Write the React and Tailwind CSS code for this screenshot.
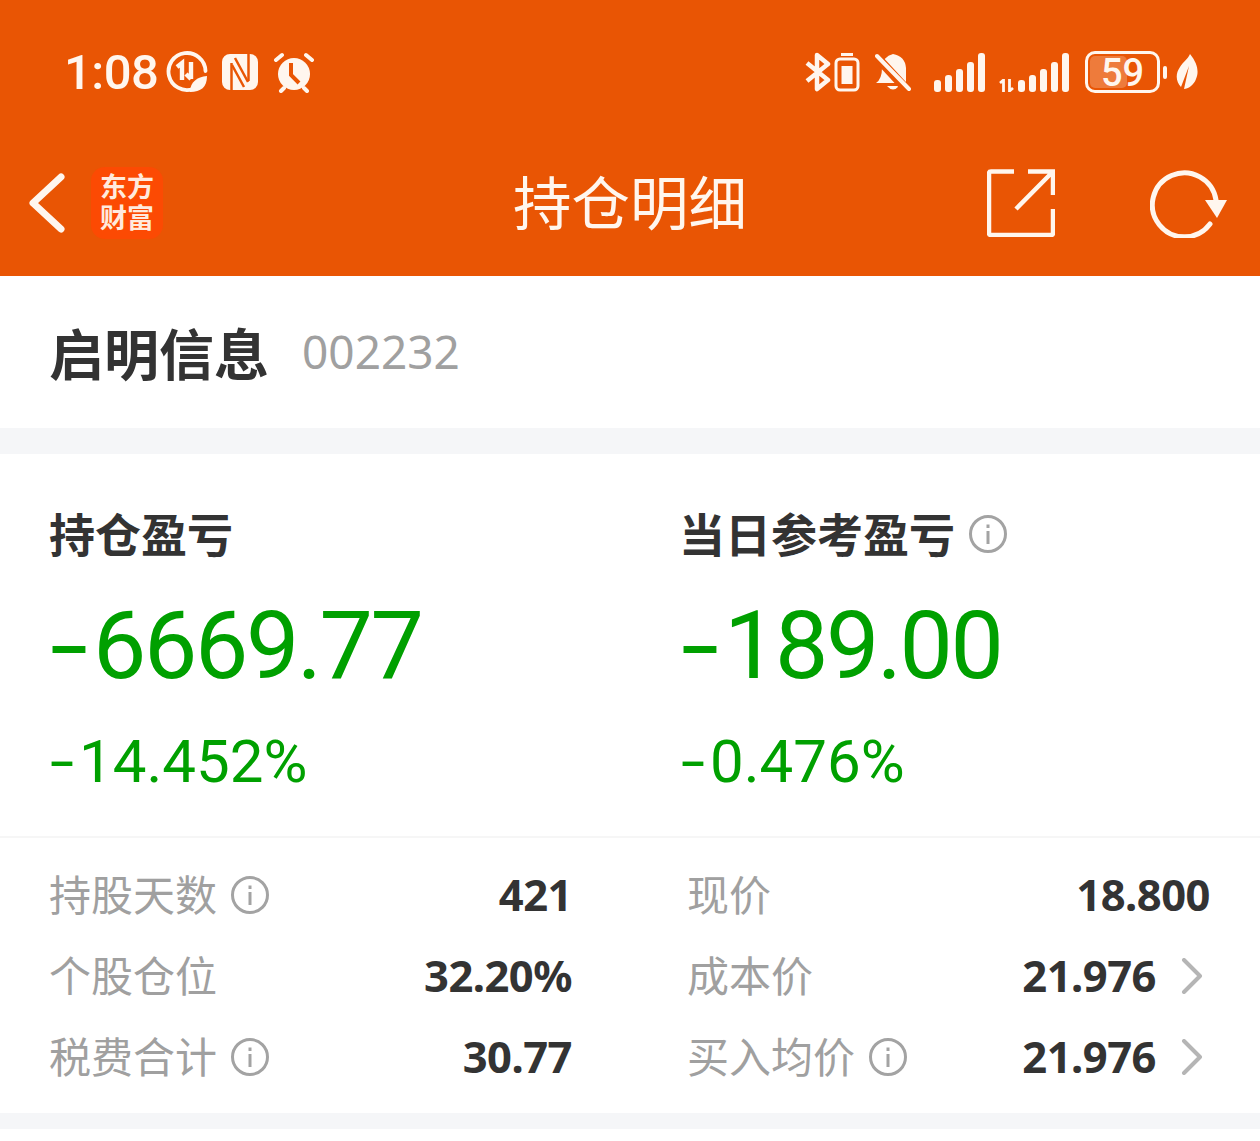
import React from "react";

const CJK = { fontFamily: '"Noto Sans CJK SC", "Noto Sans", sans-serif' };
const NUM = { fontFamily: 'Roboto, sans-serif' };

function Info({ size = 40 }) {
  return (
    <svg width={size} height={size} viewBox="0 0 40 40" fill="none" className="shrink-0">
      <circle cx="20" cy="20" r="17.5" stroke="#a3a3a3" strokeWidth="3" />
      <rect x="18.5" y="17" width="3" height="13" fill="#a3a3a3" />
      <rect x="18.5" y="10.5" width="3" height="3.5" fill="#a3a3a3" />
    </svg>
  );
}

function Chevron() {
  return (
    <svg width="24" height="36" viewBox="0 0 24 36" fill="none" className="shrink-0">
      <path d="M4 2 L20 18 L4 34" stroke="#b5b5b5" strokeWidth="4" strokeLinecap="round" strokeLinejoin="round" />
    </svg>
  );
}

function StatusLeft() {
  return (
    <div className="flex items-center">
      <span className="text-[49px] font-medium leading-none text-[#fff6ee] tracking-[-0.5px]" style={NUM}>1:08</span>
      <svg width="42" height="42" viewBox="0 0 42 42" fill="none" className="ml-[8px]">
        <path d="M27 38 A18.5 18.5 0 1 1 39.5 20" stroke="#fff6ee" strokeWidth="3.8" strokeLinecap="round" />
        <path d="M11 16 l5 -4 v17 M25 11 v17 m-5 -5 l5 5" stroke="#fff6ee" strokeWidth="4.4" />
        <path d="M24 41 C24 31 31 26 41 25 C41 36 35 41 24 41Z" fill="#fff6ee" />
      </svg>
      <svg width="38" height="38" viewBox="0 0 38 38" className="ml-[13px]">
        <rect x="1" y="1" width="36" height="36" rx="8" fill="#fff6ee" />
        <path d="M10.5 10 V39 M27.5 -1 V28" stroke="#e95504" strokeWidth="2.5" />
        <path d="M14 5 L27 29 M11 12 L23 34" stroke="#e95504" strokeWidth="2.5" fill="none" />
      </svg>
      <svg width="42" height="42" viewBox="0 0 42 42" fill="none" className="ml-[14px]">
        <circle cx="21" cy="23" r="16" fill="#fff6ee" />
        <path d="M18 12 V24 L26 32" stroke="#e95504" strokeWidth="4" />
        <path d="M3 9 L9 4 M39 9 L33 4 M8 40 L11 37 M34 40 L31 37" stroke="#fff6ee" strokeWidth="4" strokeLinecap="round" />
      </svg>
    </div>
  );
}

function Bars({ heights }) {
  return (
    <div className="flex items-end gap-[4px]">
      {heights.map((h, i) => (
        <div key={i} className="w-[7px] rounded-[3px] bg-[#fff6ee]" style={{ height: h }} />
      ))}
    </div>
  );
}

function StatusRight() {
  return (
    <div className="flex items-center">
      <svg width="26" height="40" viewBox="0 0 26 40" fill="none">
        <path d="M2 11 L23 28 L12 37 V3 L23 12 L2 29" stroke="#fff6ee" strokeWidth="4.5" strokeLinejoin="round" />
      </svg>
      <svg width="26" height="40" viewBox="0 0 26 40" fill="none" className="ml-[3px]">
        <rect x="7" y="1" width="12" height="3" fill="#fff6ee" />
        <rect x="2" y="7" width="22" height="31" rx="4" stroke="#fff6ee" strokeWidth="3" />
        <rect x="7.5" y="14" width="11" height="18" fill="#fff6ee" />
      </svg>
      <svg width="36" height="40" viewBox="0 0 36 40" fill="none" className="ml-[15px]">
        <path d="M1 31 Q7 27 7 16 Q8 4 18 2 Q30 4 31 16 L31 31Z" fill="#fff6ee" />
        <path d="M12 34 Q18 41 24 34Z" fill="#fff6ee" />
        <path d="M-2 1 L33 39" stroke="#e95504" strokeWidth="9" />
        <path d="M2 4 L34 37" stroke="#fff6ee" strokeWidth="4" strokeLinecap="round" />
      </svg>
      <div className="ml-[23px] h-[40px] flex items-end"><Bars heights={[12, 17, 23, 30, 39]} /></div>
      <div className="ml-[13px] flex items-end h-[40px]">
        <svg width="17" height="13" viewBox="0 0 17 13" fill="none" className="mr-[3px]">
          <path d="M2 4 L5.5 1 V13 M11.5 0 V12 L15 9" stroke="#fff6ee" strokeWidth="2.8" />
        </svg>
        <Bars heights={[12, 17, 23, 30, 39]} />
      </div>
      <div className="relative ml-[16px] h-[42px] w-[75px] rounded-[10px] border-[3px] border-[#fff6ee] overflow-hidden">
        <div className="absolute inset-y-[2px] left-[2px] w-[37px] rounded-[5px] bg-[#ee7b3b]" />
        <div className="relative flex h-full items-center justify-center pt-[1px] text-[38px] font-medium leading-none text-[#fff6ee]" style={NUM}>59</div>
      </div>
      <div className="ml-[3px] h-[13px] w-[4px] rounded-[2px] bg-[#fff6ee]" />
      <svg width="22" height="36" viewBox="0 0 22 36" className="ml-[9px]">
        <path d="M14 0 C22 10 23 18 20 25 C18 31 12 35 8 35 L13 12 L5 33 C0 28 -1 20 4 13 C7 8 12 5 14 0Z" fill="#fff6ee" />
      </svg>
    </div>
  );
}

function Row({ label, info, value, chevron }) {
  return (
    <div className="flex h-[81px] items-center">
      <span className="-ml-[1px] -translate-y-[2px] text-[42px] leading-none text-[#a0a0a0]" style={CJK}>{label}</span>
      {info && <span className="ml-[13px]"><Info /></span>}
      <span className="ml-auto text-[43.5px] font-bold leading-none text-[#333333]" style={{ fontFamily: '"Noto Sans", sans-serif', letterSpacing: "-0.5px" }}>{value}</span>
      {chevron && <span className="ml-[24px] mr-[6px]"><Chevron /></span>}
    </div>
  );
}

function Big({ children }) {
  return (
    <div className="mt-[44px] flex text-[95px] leading-[90px] tracking-[-2.4px] text-[#00a000]" style={NUM}>
      <span className="inline-block w-[43px] origin-left scale-x-[1.45]">-</span>
      <span>{children}</span>
    </div>
  );
}

function Pct({ children }) {
  return (
    <div className="mt-[41px] flex text-[60px] leading-[60px] text-[#00a000]" style={NUM}>
      <span className="inline-block w-[29px] origin-left scale-x-[1.45]">-</span>
      <span>{children}</span>
    </div>
  );
}

export default function App() {
  return (
    <div className="min-h-[1141px] w-[1260px] overflow-hidden bg-white">
      <header className="bg-[#e95504]">
        <div className="flex h-[140px] items-center justify-between pt-[4px] pl-[64px] pr-[62px]">
          <StatusLeft />
          <StatusRight />
        </div>
        <div className="grid h-[136px] grid-cols-[1fr_auto_1fr] items-center pb-[10px] pl-[28px] pr-[32px]">
          <div className="flex items-center">
            <svg width="38" height="60" viewBox="0 0 38 60" fill="none" className="mr-[25px]">
              <path d="M33 4 L5 30 L33 56" stroke="#fff6ee" strokeWidth="7" strokeLinecap="round" strokeLinejoin="round" />
            </svg>
            <div className="flex h-[72px] w-[72px] items-center justify-center rounded-[14px] bg-[#fc4a03] pb-[4px] text-center text-[27px] font-bold leading-[31px] text-[#ffeadd]" style={CJK}>
              <span>东方<br />财富</span>
            </div>
          </div>
          <div className="translate-x-[2px] -translate-y-[3px] text-center text-[58.5px] leading-[70px] text-[#fff6ee]" style={CJK}>持仓明细</div>
          <div className="flex items-center justify-end">
            <svg width="68" height="68" viewBox="0 0 68 68" fill="none">
              <path d="M27 2.5 H4 Q2 2.5 2 4.5 V64 Q2 66 4 66 H64 Q66 66 66 64 V40" stroke="#fff6ee" strokeWidth="4.5" />
              <path d="M41 2.5 H66 V26 M66 2.5 L29 40" stroke="#fff6ee" strokeWidth="4.5" />
            </svg>
            <svg width="78" height="70" viewBox="0 0 78 70" fill="none" className="ml-[95px]">
              <path d="M60 56 A32 32 0 1 1 66 32" stroke="#fff6ee" strokeWidth="5" strokeLinecap="round" />
              <path d="M55 32 H77 L67 50Z" fill="#fff6ee" />
            </svg>
          </div>
        </div>
      </header>

      <section className="flex h-[152px] items-center pb-[2px] pl-[49px] pr-[50px]">
        <span className="text-[55px] font-bold leading-none text-[#333333]" style={CJK}>启明信息</span>
        <span className="ml-[33px] text-[46px] leading-none text-[#a0a0a0]" style={{ fontFamily: '"Noto Sans", sans-serif' }}>002232</span>
      </section>
      <div className="h-[26px] bg-[#f5f6f8]" />

      <section>
        <div className="grid h-[384px] grid-cols-[631px_1fr] border-b-2 border-[#f6f6f6] pl-[50px] pr-[50px]">
          <div>
            <div className="-ml-[1px] mt-[53px] flex h-[50px] items-center text-[46px] font-bold leading-none text-[#333333]" style={CJK}>持仓盈亏</div>
            <Big>6669.77</Big>
            <Pct>14.452%</Pct>
          </div>
          <div>
            <div className="-ml-[2px] mt-[53px] flex h-[50px] items-center text-[46px] font-bold leading-none text-[#333333]" style={CJK}>
              当日参考盈亏
              <span className="ml-[13px] translate-y-[2px]"><Info /></span>
            </div>
            <Big>189.00</Big>
            <Pct>0.476%</Pct>
          </div>
        </div>
        <div className="grid h-[275px] grid-cols-[522px_522px] content-start justify-between pl-[50px] pr-[50px] pt-[16px]">
          <div>
            <Row label="持股天数" info value="421" />
            <Row label="个股仓位" value="32.20%" />
            <Row label="税费合计" info value="30.77" />
          </div>
          <div>
            <Row label="现价" value="18.800" />
            <Row label="成本价" value="21.976" chevron />
            <Row label="买入均价" info value="21.976" chevron />
          </div>
        </div>
      </section>
      <div className="h-[16px] bg-[#f5f6f8]" />
    </div>
  );
}
